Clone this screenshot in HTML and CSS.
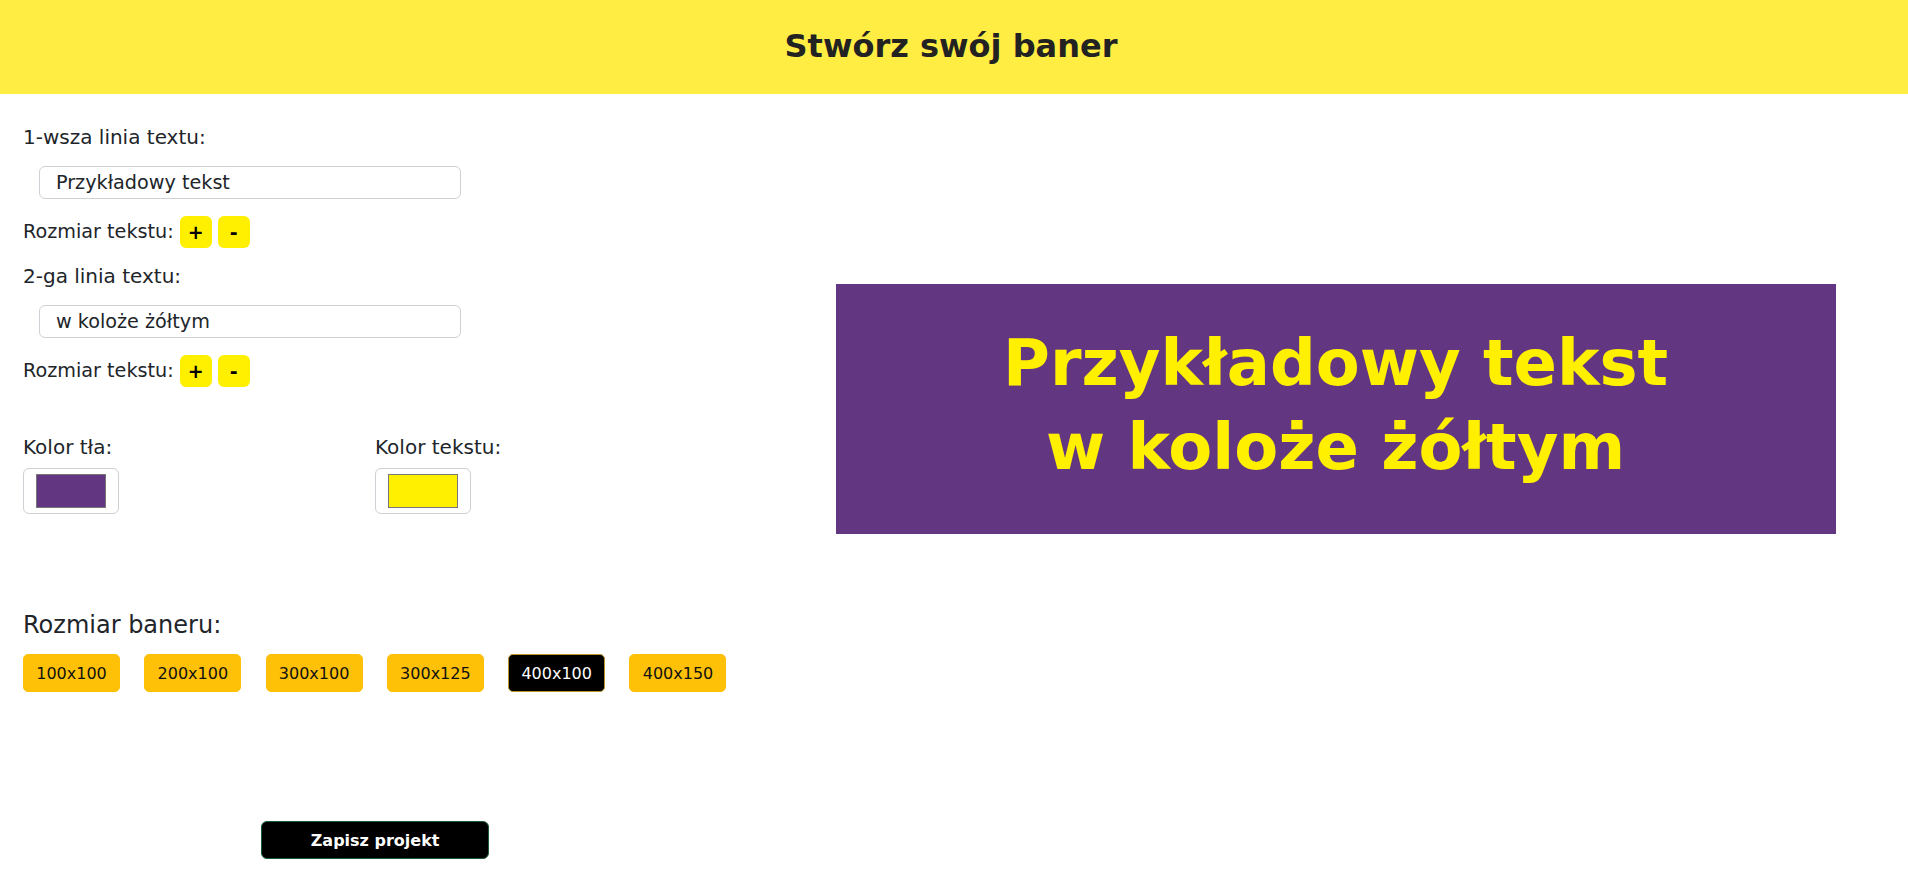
FILE: index.html
```html
<!DOCTYPE html>
<html lang="pl">
<head>
<meta charset="utf-8">
<title>Stwórz swój baner</title>
<link rel="stylesheet" href="styles.css">
</head>
<body>
<header class="topbar">
  <h1 class="title">Stwórz swój baner</h1>
</header>
<main class="layout">
  <section class="editor">
    <div class="field-label first">1-wsza linia textu:</div>
    <div class="text-input">Przykładowy tekst</div>
    <div class="size-row">
      <span class="size-label">Rozmiar tekstu:</span>
      <button class="step-btn">+</button>
      <button class="step-btn">-</button>
    </div>
    <div class="field-label">2-ga linia textu:</div>
    <div class="text-input">w koloże żółtym</div>
    <div class="size-row">
      <span class="size-label">Rozmiar tekstu:</span>
      <button class="step-btn">+</button>
      <button class="step-btn">-</button>
    </div>
    <div class="colors">
      <div class="color-field">
        <div class="field-label plain">Kolor tła:</div>
        <div class="color-box"><div class="swatch swatch-purple"></div></div>
      </div>
      <div class="color-field">
        <div class="field-label plain">Kolor tekstu:</div>
        <div class="color-box"><div class="swatch swatch-yellow"></div></div>
      </div>
    </div>
    <div class="section-title">Rozmiar baneru:</div>
    <div class="sizes">
      <button class="size-btn">100x100</button>
      <button class="size-btn">200x100</button>
      <button class="size-btn">300x100</button>
      <button class="size-btn">300x125</button>
      <button class="size-btn active">400x100</button>
      <button class="size-btn">400x150</button>
    </div>
    <div class="save-wrap">
      <button class="save-btn">Zapisz projekt</button>
    </div>
  </section>
  <section class="preview">
    <div class="banner">
      <div class="banner-line">Przykładowy tekst</div>
      <div class="banner-line">w koloże żółtym</div>
    </div>
  </section>
</main>
</body>
</html>
```
FILE: styles.css
```css
* { box-sizing: border-box; }
html, body {
  margin: 0;
  padding: 0;
  background: #ffffff;
  font-family: "DejaVu Sans", "Liberation Sans", sans-serif;
  color: #212529;
}
.topbar {
  height: 94px;
  background: #ffed43;
  display: flex;
  align-items: center;
  justify-content: center;
  padding: 0 6px 2px 0;
}
.title {
  margin: 0;
  font-size: 32px;
  font-weight: bold;
  color: #222222;
}
.layout {
  display: flex;
  align-items: flex-start;
}
.editor {
  width: 40%;
  padding: 31px 36px 0 23px;
  display: flex;
  flex-direction: column;
}
.field-label {
  font-size: 20px;
  line-height: 24px;
  margin-top: 16px;
}
.field-label.first { margin-top: 0; }
.field-label.plain { margin-top: 0; }
.text-input {
  margin-top: 17px;
  margin-left: 16px;
  width: 422px;
  height: 33px;
  border: 1px solid #cdd0d4;
  border-radius: 6px;
  padding: 0 16px;
  font-size: 19.2px;
  line-height: 31px;
  color: #212529;
}
.size-row {
  margin-top: 17px;
  display: flex;
  align-items: center;
  height: 32px;
}
.size-label {
  font-size: 19.2px;
  line-height: 24px;
  margin-right: 6px;
}
.step-btn {
  width: 32px;
  height: 32px;
  margin-right: 6px;
  border: none;
  border-radius: 6px;
  background: #fff000;
  color: #000;
  font-family: "DejaVu Sans", sans-serif;
  font-weight: bold;
  font-size: 19px;
  padding: 0;
  line-height: 32px;
}
.colors {
  margin-top: 48px;
  display: grid;
  grid-template-columns: 352px 352px;
}
.color-box {
  margin-top: 9px;
  width: 96px;
  height: 46px;
  border: 1px solid #cdd0d4;
  border-radius: 6px;
  display: flex;
  align-items: center;
  justify-content: center;
}
.swatch {
  width: 70px;
  height: 34px;
  border: 1px solid #777777;
}
.swatch-purple { background: #623681; }
.swatch-yellow { background: #fff000; }
.section-title {
  margin-top: 97px;
  font-size: 24px;
  line-height: 28px;
}
.sizes {
  margin-top: 15px;
  display: flex;
  gap: 24.3px;
}
.size-btn {
  width: 97px;
  height: 38px;
  border: 1px solid #ffc107;
  border-radius: 5px;
  background: #ffc107;
  color: #111;
  font-family: "DejaVu Sans", sans-serif;
  font-size: 16px;
  padding: 0;
}
.size-btn.active {
  background: #000;
  color: #fff;
  border-color: #b8962a;
}
.save-wrap {
  margin-top: 129px;
  display: flex;
  justify-content: center;
}
.save-btn {
  width: 228px;
  height: 38px;
  background: #000;
  color: #fff;
  border: 1px solid #1d5c3a;
  border-radius: 6px;
  font-family: "DejaVu Sans", sans-serif;
  font-weight: bold;
  font-size: 16px;
  padding: 0;
}
.preview {
  width: 60%;
  padding-top: 190px;
  display: flex;
  justify-content: center;
}
.banner {
  width: 1000px;
  height: 250px;
  flex: none;
  background: #623681;
  color: #fff000;
  display: flex;
  flex-direction: column;
  align-items: center;
  justify-content: center;
  padding-bottom: 8px;
}
.banner-line {
  font-size: 64px;
  font-weight: bold;
  line-height: 84px;
  white-space: nowrap;
}
```
